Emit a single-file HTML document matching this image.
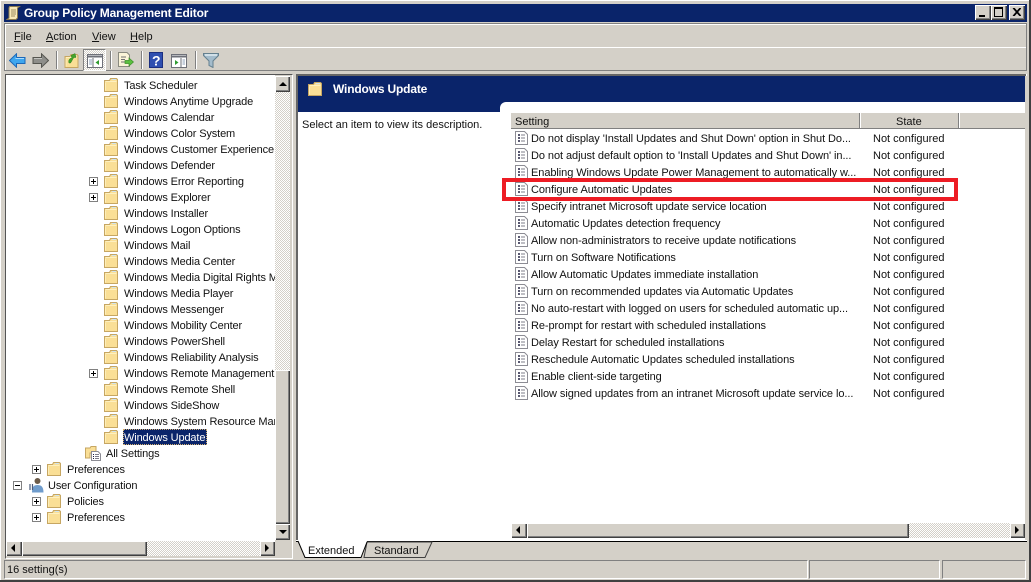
<!DOCTYPE html>
<html><head><meta charset="utf-8"><title>Group Policy Management Editor</title>
<style>
html,body{margin:0;padding:0;width:1031px;height:582px;overflow:hidden;background:#d4d0c8}
body{position:relative;font:11px/18px "Liberation Sans",sans-serif;color:#000}
.a,.t,.l,.s,svg.i{position:absolute}
.a{display:block}
.t{height:16px;white-space:nowrap;color:#111;letter-spacing:-.13px}
.l{left:531px;height:16px;white-space:nowrap;color:#111;letter-spacing:-.07px}
.s{left:873px;height:16px;white-space:nowrap;color:#111}
.out{background:#d4d0c8;box-shadow:inset 1px 1px 0 #fff,inset -1px -1px 0 #404040,inset -2px -2px 0 #808080}
.dith{background:repeating-conic-gradient(#d4d0c8 0 25%,#fff 0 50%) 0 0/2px 2px}
.m{position:absolute;top:28px;white-space:nowrap;color:#111}
.b{font-size:12px;line-height:16px;font-weight:bold;letter-spacing:-.17px;color:#fff;white-space:nowrap}
u{text-decoration:underline}
.sep{position:absolute;top:51px;width:1px;height:18px;background:#808080;box-shadow:1px 0 0 #fff}
</style></head><body>
<svg width="0" height="0" style="position:absolute">
<defs>
<symbol id="f" viewBox="0 0 14 14"><path d="M.5 2.500H5.500L6.500 .5H12.500L13.500 1.500V13.500H.5Z" fill="#fadf96" stroke="#c6a662"/><path d="M1.500 3.500H12.500" stroke="#fdf0c0"/><path d="M1.500 4.500V12.500" stroke="#fdeeb8"/><path d="M8 1.500H12" stroke="#cfe4ee"/></symbol>
<symbol id="p" viewBox="0 0 9 9"><rect x=".5" y=".5" width="8" height="8" fill="#fff" stroke="#808080"/><path d="M2 4.500H7M4.500 2V7" stroke="#000"/></symbol>
<symbol id="n" viewBox="0 0 9 9"><rect x=".5" y=".5" width="8" height="8" fill="#fff" stroke="#808080"/><path d="M2 4.500H7" stroke="#000"/></symbol>
<symbol id="d" viewBox="0 0 13 14"><path d="M.5 .5H9.500L12.500 3.500V13.500H.5Z" fill="#fff" stroke="#8c8c94"/><path d="M3 4H5M3 7H5M3 10H5" stroke="#202040" stroke-width="1.400"/><path d="M6 4H10M6 7H10M6 10H10" stroke="#7c7c88"/></symbol>
</defs></svg>

<!-- window frame -->
<div class="a" style="left:0;top:0;width:1031px;height:1px;background:#fff"></div>
<div class="a" style="left:0;top:0;width:1px;height:582px;background:#fff"></div>
<div class="a" style="left:0;top:580px;width:1031px;height:2px;background:#404040"></div>
<div class="a" style="left:1029px;top:0;width:2px;height:582px;background:#404040"></div>
<!-- title -->
<div class="a" style="left:4px;top:4px;width:1023px;height:18px;background:#0a246a"></div>
<svg class="i" style="left:6px;top:5px" width="15" height="16" viewBox="0 0 15 16"><path d="M3.500 1.500H13.500L11.500 3V13L10 14.500H1L3 13V3Z" fill="#f8e9b8" stroke="#8a7a50"/><path d="M5 5H10M5 7H10M5 9H10M5 11H9" stroke="#9a8a60"/></svg>
<div class="a b" style="left:24px;top:5px">Group Policy Management Editor</div>
<div class="a out" style="left:975px;top:5px;width:16px;height:15px"><div class="a" style="left:4px;top:10px;width:6px;height:2px;background:#000"></div></div>
<div class="a out" style="left:991px;top:5px;width:16px;height:15px"><div class="a" style="left:3px;top:2px;width:7px;height:7px;border:1px solid #000;border-top-width:2px"></div></div>
<div class="a out" style="left:1009px;top:5px;width:16px;height:15px"><svg class="i" style="left:3px;top:3px" width="9" height="8"><path d="M1 0L8 8M2 0L9 8M8 0L1 8M9 0L2 8" stroke="#000" stroke-width="1"/></svg></div>

<!-- menu/toolbar bands -->
<div class="a" style="left:4px;top:23px;width:1021px;height:23px;border:1px solid #808080;box-shadow:inset 1px 1px 0 #fff"></div>
<div class="a" style="left:4px;top:47px;width:1021px;height:23px;border:1px solid #808080;border-top:0;box-shadow:inset 1px 0 0 #fff"></div>
<div class="a" style="left:5px;top:47px;width:1021px;height:1px;background:#fff"></div>
<div class="m" style="left:14px"><u>F</u>ile</div>
<div class="m" style="left:46px"><u>A</u>ction</div>
<div class="m" style="left:92px"><u>V</u>iew</div>
<div class="m" style="left:130px"><u>H</u>elp</div>

<!-- toolbar -->
<svg class="i" style="left:9px;top:53px" width="17" height="15" viewBox="0 0 17 15"><path d="M.5 7.500L7.500 .8V4.500H16V10.500H7.500V14.200Z" fill="#3ea6ee" stroke="#1c68b8"/><path d="M7 4.800V5.500H15" stroke="#a8dcff" fill="none"/></svg>
<svg class="i" style="left:32px;top:53px" width="17" height="15" viewBox="0 0 17 15"><path d="M16.500 7.500L9.500 .8V4.500H1V10.500H9.500V14.200Z" fill="#8e8e8a" stroke="#55554f"/><path d="M2 5.500H10" stroke="#c4c4c0"/></svg>
<div class="sep" style="left:56px"></div>
<svg class="i" style="left:64px;top:52px" width="15" height="16"><use href="#f" x=".5" y="2" width="14" height="14"/><path d="M5 11C4 8 6 6 8 6L7 3.500L11 1.500L12 5.500L10 5.500C8.500 7 8 9 6.500 11Z" fill="#43a52b" stroke="#2f7f1c" stroke-width=".5"/></svg>
<div class="a dith" style="left:83px;top:49px;width:21px;height:20px;border:1px solid;border-color:#808080 #fff #fff #808080"></div>
<svg class="i" style="left:87px;top:54px" width="16" height="14" viewBox="0 0 16 14"><rect x=".5" y=".5" width="15" height="13" fill="#fff" stroke="#6e7078"/><path d="M1 1.500H15V3.500H1Z" fill="#6e7078"/><path d="M6 4V13" stroke="#6e7078"/><path d="M2 6H5M2 8H5M2 10H5" stroke="#8ea0b8"/><path d="M12 6V11L8.500 8.500Z" fill="#2f9b2f"/></svg>
<div class="sep" style="left:110px"></div>
<svg class="i" style="left:117px;top:52px" width="17" height="16" viewBox="0 0 17 16"><path d="M1.500 .5H10L12.500 3V14.500H1.500Z" fill="#fbf4d8" stroke="#8a8a80"/><path d="M4 5H9M4 7.500H8M4 10H8" stroke="#707070"/><path d="M8 8.500H12V6L16.500 10L12 14V11.500H8Z" fill="#5cc040" stroke="#3d8f2a" stroke-width=".7"/></svg>
<div class="sep" style="left:141px"></div>
<svg class="i" style="left:149px;top:52px" width="14" height="16"><rect width="14" height="16" fill="#2f4fb0"/><rect x=".5" y=".5" width="13" height="15" fill="none" stroke="#1c2f80"/><text x="3" y="13.500" fill="#fff" font-family="Liberation Sans" font-weight="bold" font-size="14">?</text></svg>
<svg class="i" style="left:171px;top:54px" width="16" height="14" viewBox="0 0 16 14"><rect x=".5" y=".5" width="15" height="13" fill="#fff" stroke="#6e7078"/><path d="M1 1.500H15V3.500H1Z" fill="#6e7078"/><path d="M10 4V13" stroke="#6e7078"/><path d="M11.500 6H14M11.500 8H14M11.500 10H14" stroke="#8ea0b8"/><path d="M4 6V11L7.500 8.500Z" fill="#2f9b2f"/></svg>
<div class="sep" style="left:195px"></div>
<svg class="i" style="left:203px;top:53px" width="16" height="15" viewBox="0 0 16 15"><path d="M.5 .5H15.500V2.500L10 8V14.500L6 12.500V8L.5 2.500Z" fill="#a4bccc" stroke="#64808f"/><path d="M2 2H14" stroke="#e0ecf2" stroke-width="1.500"/></svg>

<!-- left pane -->
<div class="a" style="left:5px;top:74px;width:286px;height:483px;border:1px solid;border-color:#555 #fff #fff #555;box-sizing:content-box"></div>
<div class="a" style="left:6px;top:75px;width:269px;height:466px;background:#fff;overflow:hidden" id="tree">
<svg class="i" style="left:98px;top:3px" width="14" height="14"><use href="#f"/></svg><div class="t" style="left:118px;top:2px">Task Scheduler</div>
<svg class="i" style="left:98px;top:19px" width="14" height="14"><use href="#f"/></svg><div class="t" style="left:118px;top:18px">Windows Anytime Upgrade</div>
<svg class="i" style="left:98px;top:35px" width="14" height="14"><use href="#f"/></svg><div class="t" style="left:118px;top:34px">Windows Calendar</div>
<svg class="i" style="left:98px;top:51px" width="14" height="14"><use href="#f"/></svg><div class="t" style="left:118px;top:50px">Windows Color System</div>
<svg class="i" style="left:98px;top:67px" width="14" height="14"><use href="#f"/></svg><div class="t" style="left:118px;top:66px">Windows Customer Experience</div>
<svg class="i" style="left:98px;top:83px" width="14" height="14"><use href="#f"/></svg><div class="t" style="left:118px;top:82px">Windows Defender</div>
<svg class="i" style="left:83px;top:102px" width="9" height="9"><use href="#p"/></svg><svg class="i" style="left:98px;top:99px" width="14" height="14"><use href="#f"/></svg><div class="t" style="left:118px;top:98px">Windows Error Reporting</div>
<svg class="i" style="left:83px;top:118px" width="9" height="9"><use href="#p"/></svg><svg class="i" style="left:98px;top:115px" width="14" height="14"><use href="#f"/></svg><div class="t" style="left:118px;top:114px">Windows Explorer</div>
<svg class="i" style="left:98px;top:131px" width="14" height="14"><use href="#f"/></svg><div class="t" style="left:118px;top:130px">Windows Installer</div>
<svg class="i" style="left:98px;top:147px" width="14" height="14"><use href="#f"/></svg><div class="t" style="left:118px;top:146px">Windows Logon Options</div>
<svg class="i" style="left:98px;top:163px" width="14" height="14"><use href="#f"/></svg><div class="t" style="left:118px;top:162px">Windows Mail</div>
<svg class="i" style="left:98px;top:179px" width="14" height="14"><use href="#f"/></svg><div class="t" style="left:118px;top:178px">Windows Media Center</div>
<svg class="i" style="left:98px;top:195px" width="14" height="14"><use href="#f"/></svg><div class="t" style="left:118px;top:194px">Windows Media Digital Rights Management</div>
<svg class="i" style="left:98px;top:211px" width="14" height="14"><use href="#f"/></svg><div class="t" style="left:118px;top:210px">Windows Media Player</div>
<svg class="i" style="left:98px;top:227px" width="14" height="14"><use href="#f"/></svg><div class="t" style="left:118px;top:226px">Windows Messenger</div>
<svg class="i" style="left:98px;top:243px" width="14" height="14"><use href="#f"/></svg><div class="t" style="left:118px;top:242px">Windows Mobility Center</div>
<svg class="i" style="left:98px;top:259px" width="14" height="14"><use href="#f"/></svg><div class="t" style="left:118px;top:258px">Windows PowerShell</div>
<svg class="i" style="left:98px;top:275px" width="14" height="14"><use href="#f"/></svg><div class="t" style="left:118px;top:274px">Windows Reliability Analysis</div>
<svg class="i" style="left:83px;top:294px" width="9" height="9"><use href="#p"/></svg><svg class="i" style="left:98px;top:291px" width="14" height="14"><use href="#f"/></svg><div class="t" style="left:118px;top:290px">Windows Remote Management</div>
<svg class="i" style="left:98px;top:307px" width="14" height="14"><use href="#f"/></svg><div class="t" style="left:118px;top:306px">Windows Remote Shell</div>
<svg class="i" style="left:98px;top:323px" width="14" height="14"><use href="#f"/></svg><div class="t" style="left:118px;top:322px">Windows SideShow</div>
<svg class="i" style="left:98px;top:339px" width="14" height="14"><use href="#f"/></svg><div class="t" style="left:118px;top:338px">Windows System Resource Manager</div>
<svg class="i" style="left:98px;top:355px" width="14" height="14"><use href="#f"/></svg>
<div class="t" style="left:117px;top:354px;width:84px;height:16px;box-sizing:border-box;background:#0a246a;color:#fff;outline:1px dotted #d4b070;outline-offset:-1px;padding-left:1px">Windows Update</div>
<svg class="i" style="left:79px;top:370px" width="17" height="16" viewBox="0 0 17 16"><path d="M.5 3H5L6 1.500H11V8H5V13H.5Z" fill="#fadf96" stroke="#c6a662"/><path d="M6.500 6.500H13L15.500 9V15.500H6.500Z" fill="#fff" stroke="#8c8c94"/><path d="M8 9.500H9M8 11.500H9M8 13.500H9" stroke="#202040"/><path d="M10 9.500H14M10 11.500H14M10 13.500H14" stroke="#7c7c88"/></svg>
<div class="t" style="left:100px;top:370px">All Settings</div>
<svg class="i" style="left:26px;top:390px" width="9" height="9"><use href="#p"/></svg><svg class="i" style="left:41px;top:387px" width="14" height="14"><use href="#f"/></svg><div class="t" style="left:61px;top:386px">Preferences</div>
<svg class="i" style="left:7px;top:406px" width="9" height="9"><use href="#n"/></svg>
<svg class="i" style="left:23px;top:402px" width="15" height="16" viewBox="0 0 15 16"><circle cx="8.500" cy="4" r="3" fill="#6b5a48"/><path d="M3 15.500C3 9.500 5 8 8.500 8S14.500 9.500 14.500 15.500Z" fill="#6f9ccc"/><path d="M1 7V13M3.500 7V13" stroke="#4a5a7a" stroke-width="1.200" fill="none"/></svg>
<div class="t" style="left:42px;top:402px">User Configuration</div>
<svg class="i" style="left:26px;top:422px" width="9" height="9"><use href="#p"/></svg><svg class="i" style="left:41px;top:419px" width="14" height="14"><use href="#f"/></svg><div class="t" style="left:61px;top:418px">Policies</div>
<svg class="i" style="left:26px;top:438px" width="9" height="9"><use href="#p"/></svg><svg class="i" style="left:41px;top:435px" width="14" height="14"><use href="#f"/></svg><div class="t" style="left:61px;top:434px">Preferences</div>
</div>
<!-- left vertical scroll -->
<div class="a dith" style="left:275px;top:92px;width:15px;height:278px"></div>
<div class="a out" style="left:275px;top:76px;width:15px;height:16px"><div class="a" style="left:4px;top:6px;width:0;height:0;border:4px solid transparent;border-bottom-color:#000;border-top:0"></div></div>
<div class="a out" style="left:275px;top:370px;width:15px;height:154px"></div>
<div class="a out" style="left:275px;top:524px;width:15px;height:16px"><div class="a" style="left:4px;top:6px;width:0;height:0;border:4px solid transparent;border-top-color:#000;border-bottom:0"></div></div>
<!-- left horizontal scroll -->
<div class="a dith" style="left:147px;top:541px;width:113px;height:15px"></div>
<div class="a out" style="left:6px;top:541px;width:16px;height:15px"><div class="a" style="left:5px;top:3px;width:0;height:0;border:4px solid transparent;border-right-color:#000;border-left:0"></div></div>
<div class="a out" style="left:22px;top:541px;width:125px;height:15px"></div>
<div class="a out" style="left:260px;top:541px;width:15px;height:15px"><div class="a" style="left:5px;top:3px;width:0;height:0;border:4px solid transparent;border-left-color:#000;border-right:0"></div></div>

<!-- right pane -->
<div class="a" style="left:296px;top:74px;width:731px;height:467px;background:#fff"></div>
<div class="a" style="left:296px;top:74px;width:2px;height:467px;background:#666"></div>
<div class="a" style="left:296px;top:74px;width:731px;height:2px;background:#666"></div>
<div class="a" style="left:1026px;top:74px;width:1px;height:467px;background:#fff"></div>
<div class="a" style="left:298px;top:76px;width:727px;height:36px;background:#0a246a"></div>
<div class="a" style="left:500px;top:102px;width:525px;height:12px;background:#fff;border-top-left-radius:6px"></div>
<div class="a" style="left:1025px;top:76px;width:2px;height:465px;background:#d4d0c8"></div>
<svg class="i" style="left:308px;top:82px" width="14" height="14"><use href="#f"/></svg>
<div class="a b" style="left:333px;top:81px">Windows Update</div>
<div class="a" style="left:302px;top:116px;white-space:nowrap;color:#111">Select an item to view its description.</div>

<!-- list header -->
<div class="a" style="left:511px;top:113px;width:514px;height:15px;background:#d4d0c8;border-bottom:1px solid #808080"></div>
<div class="a" style="left:515px;top:113px;color:#111">Setting</div>
<div class="a" style="left:896px;top:113px;color:#111">State</div>
<div class="a" style="left:859px;top:113px;width:1px;height:15px;background:#808080;box-shadow:1px 0 0 #fff"></div>
<div class="a" style="left:958px;top:113px;width:1px;height:15px;background:#808080;box-shadow:1px 0 0 #fff"></div>

<!-- list rows -->
<svg class="i" style="left:515px;top:131px" width="13" height="14"><use href="#d"/></svg><div class="l" style="top:130px">Do not display 'Install Updates and Shut Down' option in Shut Do...</div><div class="s" style="top:130px">Not configured</div>
<svg class="i" style="left:515px;top:148px" width="13" height="14"><use href="#d"/></svg><div class="l" style="top:147px">Do not adjust default option to 'Install Updates and Shut Down' in...</div><div class="s" style="top:147px">Not configured</div>
<svg class="i" style="left:515px;top:165px" width="13" height="14"><use href="#d"/></svg><div class="l" style="top:164px">Enabling Windows Update Power Management to automatically w...</div><div class="s" style="top:164px">Not configured</div>
<svg class="i" style="left:515px;top:182px" width="13" height="14"><use href="#d"/></svg><div class="l" style="top:181px">Configure Automatic Updates</div><div class="s" style="top:181px">Not configured</div>
<svg class="i" style="left:515px;top:199px" width="13" height="14"><use href="#d"/></svg><div class="l" style="top:198px">Specify intranet Microsoft update service location</div><div class="s" style="top:198px">Not configured</div>
<svg class="i" style="left:515px;top:216px" width="13" height="14"><use href="#d"/></svg><div class="l" style="top:215px">Automatic Updates detection frequency</div><div class="s" style="top:215px">Not configured</div>
<svg class="i" style="left:515px;top:233px" width="13" height="14"><use href="#d"/></svg><div class="l" style="top:232px">Allow non-administrators to receive update notifications</div><div class="s" style="top:232px">Not configured</div>
<svg class="i" style="left:515px;top:250px" width="13" height="14"><use href="#d"/></svg><div class="l" style="top:249px">Turn on Software Notifications</div><div class="s" style="top:249px">Not configured</div>
<svg class="i" style="left:515px;top:267px" width="13" height="14"><use href="#d"/></svg><div class="l" style="top:266px">Allow Automatic Updates immediate installation</div><div class="s" style="top:266px">Not configured</div>
<svg class="i" style="left:515px;top:284px" width="13" height="14"><use href="#d"/></svg><div class="l" style="top:283px">Turn on recommended updates via Automatic Updates</div><div class="s" style="top:283px">Not configured</div>
<svg class="i" style="left:515px;top:301px" width="13" height="14"><use href="#d"/></svg><div class="l" style="top:300px">No auto-restart with logged on users for scheduled automatic up...</div><div class="s" style="top:300px">Not configured</div>
<svg class="i" style="left:515px;top:318px" width="13" height="14"><use href="#d"/></svg><div class="l" style="top:317px">Re-prompt for restart with scheduled installations</div><div class="s" style="top:317px">Not configured</div>
<svg class="i" style="left:515px;top:335px" width="13" height="14"><use href="#d"/></svg><div class="l" style="top:334px">Delay Restart for scheduled installations</div><div class="s" style="top:334px">Not configured</div>
<svg class="i" style="left:515px;top:352px" width="13" height="14"><use href="#d"/></svg><div class="l" style="top:351px">Reschedule Automatic Updates scheduled installations</div><div class="s" style="top:351px">Not configured</div>
<svg class="i" style="left:515px;top:369px" width="13" height="14"><use href="#d"/></svg><div class="l" style="top:368px">Enable client-side targeting</div><div class="s" style="top:368px">Not configured</div>
<svg class="i" style="left:515px;top:386px" width="13" height="14"><use href="#d"/></svg><div class="l" style="top:385px">Allow signed updates from an intranet Microsoft update service lo...</div><div class="s" style="top:385px">Not configured</div>

<!-- red highlight -->
<div class="a" style="left:502px;top:178px;width:456px;height:23px;box-sizing:border-box;border:4px solid #ed1c24"></div>

<!-- right h scroll -->
<div class="a dith" style="left:909px;top:523px;width:101px;height:15px"></div>
<div class="a out" style="left:511px;top:523px;width:16px;height:15px"><div class="a" style="left:5px;top:3px;width:0;height:0;border:4px solid transparent;border-right-color:#000;border-left:0"></div></div>
<div class="a out" style="left:527px;top:523px;width:382px;height:15px"></div>
<div class="a out" style="left:1010px;top:523px;width:15px;height:15px"><div class="a" style="left:5px;top:3px;width:0;height:0;border:4px solid transparent;border-left-color:#000;border-right:0"></div></div>

<!-- tabs -->
<div class="a" style="left:296px;top:541px;width:731px;height:18px;background:#d4d0c8"></div>
<div class="a" style="left:296px;top:540px;width:731px;height:1px;background:#fff"></div>
<div class="a" style="left:296px;top:541px;width:731px;height:1px;background:#000"></div>
<svg class="i" style="left:296px;top:540px" width="142" height="20" viewBox="0 0 142 20"><path d="M71 2H136L129 17.500H68Z" fill="#d4d0c8" stroke="#404040"/><path d="M2 1H71L65 17.500H9Z" fill="#fff"/><path d="M2 1L9 17.500H65L71 2" fill="none" stroke="#000"/></svg>
<div class="a" style="left:308px;top:542px;color:#111;white-space:nowrap">Extended</div>
<div class="a" style="left:374px;top:542px;color:#111;white-space:nowrap">Standard</div>

<!-- status bar -->
<div class="a" style="left:4px;top:560px;width:802px;height:17px;border:1px solid;border-color:#808080 #fff #fff #808080"></div>
<div class="a" style="left:809px;top:560px;width:129px;height:17px;border:1px solid;border-color:#808080 #fff #fff #808080"></div>
<div class="a" style="left:942px;top:560px;width:82px;height:17px;border:1px solid;border-color:#808080 #fff #fff #808080"></div>
<div class="a" style="left:7px;top:561px;color:#111;white-space:nowrap">16 setting(s)</div>
</body></html>
